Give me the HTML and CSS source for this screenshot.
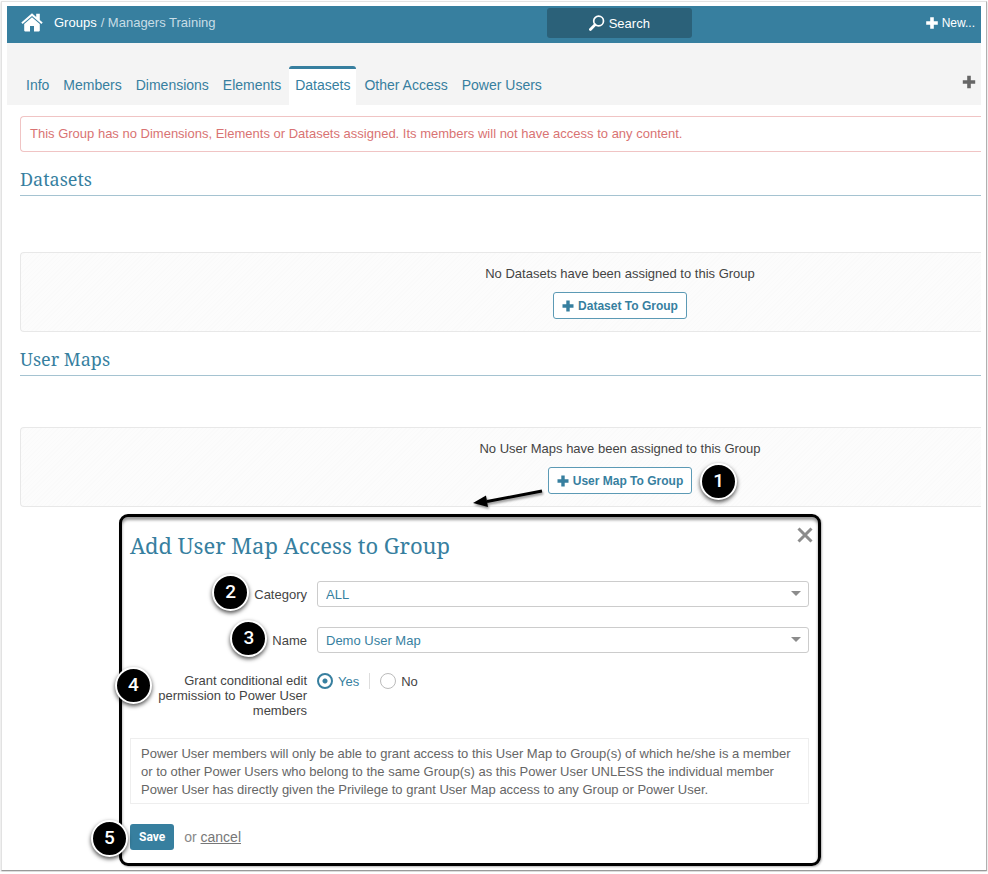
FILE: index.html
```html
<!doctype html>
<html lang="en">

<head>
    <meta charset="utf-8">
    <meta name="viewport" content="width=device-width, initial-scale=1">
    <title>Groups / Managers Training</title>
    <link rel="stylesheet" href="styles.css">
</head>

<body>
    <div class="frame">
        <header class="topbar">
            <nav class="crumbs">
                <a class="home" href="#" aria-label="Home">
                    <svg width="22" height="19" viewBox="0 0 22 19" fill="#fff">
                        <path d="M11 0.2L0.3 9.6L1.6 11.1L11 3L20.4 11.1L21.7 9.6L18.8 7.1V0.8H15.2V3.9Z" />
                        <path d="M11 4.2L3.2 10.9V17.6Q3.2 18.4 4 18.4H9V13H13V18.4H18Q18.8 18.4 18.8 17.6V10.9Z" />
                    </svg>
                </a>
                <a class="crumb" href="#">Groups</a>
                <span class="crumb-current">/ Managers Training</span>
            </nav>
            <button class="search" type="button">
                <svg width="16" height="16" viewBox="0 0 16 16" fill="none" stroke="#fff">
                    <circle cx="9.6" cy="6" r="4.9" stroke-width="1.7" />
                    <path d="M6 9.8L1.4 14.4" stroke-width="2.8" stroke-linecap="round" />
                </svg>
                Search
            </button>
            <button class="new" type="button">
                <svg width="12" height="12" viewBox="0 0 12 12" fill="#fff">
                    <path d="M4.2 0.2H7.8V4.2H11.8V7.8H7.8V11.8H4.2V7.8H0.2V4.2H4.2Z" />
                </svg>
                New...
            </button>
        </header>

        <nav class="tabs">
            <a class="tab" href="#">Info</a>
            <a class="tab" href="#">Members</a>
            <a class="tab" href="#">Dimensions</a>
            <a class="tab" href="#">Elements</a>
            <a class="tab active" href="#">Datasets</a>
            <a class="tab" href="#">Other Access</a>
            <a class="tab" href="#">Power Users</a>
            <button class="add-tab" type="button" aria-label="Add">
                <svg width="14" height="14" viewBox="0 0 14 14" fill="#666">
                    <path d="M5.2 0.8H8.8V5.2H13.2V8.8H8.8V13.2H5.2V8.8H0.8V5.2H5.2Z" />
                </svg>
            </button>
        </nav>

        <main class="content">
            <p class="alert">This Group has no Dimensions, Elements or Datasets assigned. Its members will not have access to any content.</p>

            <section class="section">
                <h2>Datasets</h2>
                <div class="panel">
                    <p>No Datasets have been assigned to this Group</p>
                    <button class="outline" type="button">
                        <svg width="12" height="12" viewBox="0 0 12 12" fill="#377f9f">
                            <path d="M4.3 0.5H7.7V4.3H11.5V7.7H7.7V11.5H4.3V7.7H0.5V4.3H4.3Z" />
                        </svg>
                        Dataset To Group
                    </button>
                </div>
            </section>

            <section class="section maps">
                <h2>User Maps</h2>
                <div class="panel">
                    <p>No User Maps have been assigned to this Group</p>
                    <div class="anchor">
                        <button class="outline" type="button">
                            <svg width="12" height="12" viewBox="0 0 12 12" fill="#377f9f">
                                <path d="M4.3 0.5H7.7V4.3H11.5V7.7H7.7V11.5H4.3V7.7H0.5V4.3H4.3Z" />
                            </svg>
                            User Map To Group
                        </button>
                        <svg class="arrow" width="72" height="24" viewBox="0 0 72 24">
                            <path d="M69 6L14 16.5" stroke="#000" stroke-width="3" />
                            <path d="M0 18L13 10.5L15 22Z" fill="#000" />
                        </svg>
                        <span class="step step-1">1</span>
                    </div>
                </div>
            </section>
        </main>

        <form class="modal">
            <div class="modal-head">
                <h1>Add User Map Access to Group</h1>
                <button class="close" type="button" aria-label="Close">
                    <svg width="16" height="16" viewBox="0 0 16 16" stroke="#8c8c8c" stroke-width="3">
                        <path d="M1.5 1.5L14.5 14.5M14.5 1.5L1.5 14.5" />
                    </svg>
                </button>
            </div>

            <div class="row">
                <label class="label" for="category"><span class="step step-2">2</span>Category</label>
                <div class="select">
                    <select id="category">
                        <option>ALL</option>
                    </select>
                </div>
            </div>

            <div class="row">
                <label class="label" for="name"><span class="step step-3">3</span>Name</label>
                <div class="select">
                    <select id="name">
                        <option>Demo User Map</option>
                    </select>
                </div>
            </div>

            <div class="row grant" role="radiogroup" aria-labelledby="grant-label">
                <div class="label" id="grant-label"><span class="step step-4">4</span>Grant conditional edit permission to Power User members</div>
                <div class="radios">
                    <label class="radio yes"><input type="radio" name="grant" checked>Yes</label>
                    <label class="radio"><input type="radio" name="grant">No</label>
                </div>
            </div>

            <p class="note">Power User members will only be able to grant access to this User Map to Group(s) of which he/she is a member or to other Power Users who belong to the same Group(s) as this Power User UNLESS the individual member Power User has directly given the Privilege to grant User Map access to any Group or Power User.</p>

            <div class="actions">
                <span class="step step-5">5</span>
                <button class="save" type="button">Save</button>
                <span>or <a class="cancel" href="#">cancel</a></span>
            </div>
        </form>
    </div>
</body>

</html>
```
FILE: styles.css
```css
* {
    box-sizing: border-box;
}

body {
    margin: 0;
    padding: 1px;
    background-color: #fff;
    color: #444;
    font-family: "Liberation Sans", Arial, sans-serif;
    font-size: 13px;
}

h1,
h2,
p {
    margin: 0;
}

a {
    color: #377f9f;
    text-decoration: none;
}

button {
    display: flex;
    align-items: center;
    justify-content: center;
    border: none;
    padding: 0;
    background: none;
    font-family: inherit;
    font-size: 13px;
    cursor: pointer;
}

.frame {
    border: 1px solid #e2e2e2;
    border-right-color: #b0b0b0;
    border-bottom-color: #999;
    box-shadow: 0 1px 2px #ccc;
    padding: 4px 5px 4px 5px;
}

/* Top bar */
.topbar {
    display: grid;
    grid-template-columns: 28fr 145px 15fr;
    align-items: center;
    height: 37px;
    background-color: #377f9f;
}

.crumbs {
    display: flex;
    align-items: center;
    gap: 4px;
    padding-left: 14px;
    padding-bottom: 4px;
}

.home {
    display: flex;
    margin-right: 7px;
}

.crumb {
    color: #fff;
}

.crumb-current {
    color: #c8dde6;
}

.search {
    gap: 4px;
    height: 30px;
    margin-bottom: 3px;
    border-radius: 3px;
    background-color: #2b6179;
    color: #fff;
}

.new {
    justify-self: end;
    gap: 4px;
    padding-right: 6px;
    padding-bottom: 4px;
    color: #fff;
    font-size: 12px;
}

/* Tabs */
.tabs {
    display: flex;
    align-items: flex-end;
    gap: 2px;
    height: 62px;
    padding-left: 13px;
    background-color: #f4f4f4;
}

.tab {
    padding: 0 6px 4px;
    border-top: 3px solid transparent;
    font-size: 14px;
    line-height: 32px;
}

.active {
    border-top-color: #377f9f;
    border-radius: 3px 3px 0 0;
    background-color: #fff;
}

.add-tab {
    margin-left: auto;
    padding: 0 5px 16px;
}

/* Content */
.content {
    padding: 11px 0 0 13px;
}

.alert {
    padding: 0 9px;
    border: 1px solid #f0c4c4;
    border-right: none;
    border-radius: 4px 0 0 4px;
    color: #d97373;
    line-height: 34px;
}

h1,
h2 {
    color: #377f9f;
    font-family: "Noto Serif", "Droid Serif", "Liberation Serif", serif;
    font-weight: normal;
}

h2 {
    padding-top: 12px;
    margin-bottom: 56px;
    border-bottom: 1px solid #a5c3d1;
    font-size: 18px;
    line-height: 31px;
}

.maps h2 {
    margin-bottom: 51px;
}

.panel {
    display: flex;
    flex-direction: column;
    align-items: center;
    padding: 12px 0 12px 238px;
    border: 1px solid #e8e8e8;
    border-right: none;
    border-radius: 4px 0 0 4px;
    background: repeating-linear-gradient(135deg, #fcfcfc 0 2px, #fafafa 2px 3px);
}

.panel p {
    margin-bottom: 9px;
    line-height: 18px;
}

.outline {
    gap: 4px;
    height: 27px;
    padding: 0 8px;
    border: 1px solid #5c9ab5;
    border-radius: 3px;
    background-color: #fff;
    color: #377f9f;
    font-size: 12px;
    font-weight: bold;
}

.anchor {
    position: relative;
}

.arrow {
    position: absolute;
    top: 18px;
    right: calc(100% + 3px);
    filter: drop-shadow(1px 2px 1px rgba(0, 0, 0, 0.4));
}

/* Dialog */
.modal {
    margin: 7px 160px 0 112px;
    padding: 10px 9px 13px 8px;
    border: 3px solid #000;
    border-radius: 9px;
    box-shadow: inset 0 3px 3px rgba(0, 0, 0, 0.4), 1px 1px 2px rgba(0, 0, 0, 0.3);
}

.modal-head {
    display: flex;
    justify-content: space-between;
    align-items: flex-start;
    margin-right: -4px;
    margin-bottom: 20px;
}

h1 {
    padding-top: 2px;
    font-size: 22px;
    line-height: 32px;
}

.row {
    display: grid;
    grid-template-columns: 177px 1fr;
    gap: 10px;
    margin-bottom: 20px;
}

.label {
    position: relative;
    justify-self: end;
    align-self: center;
    text-align: right;
    line-height: 15px;
}

.select {
    position: relative;
}

.select::after {
    content: "";
    position: absolute;
    top: 10px;
    right: 8px;
    border: 5px solid transparent;
    border-top-color: #8c8c8c;
    border-bottom: none;
    pointer-events: none;
}

select {
    display: block;
    appearance: none;
    width: 100%;
    height: 26px;
    padding: 0 8px;
    border: 1px solid #ccc;
    border-radius: 3px;
    background-color: #fff;
    color: #377f9f;
    font-family: inherit;
    font-size: 13px;
}

.grant .label {
    padding-left: 24px;
}

.radios {
    display: flex;
    align-items: center;
    align-self: start;
}

.radio {
    display: flex;
    align-items: center;
    gap: 5px;
}

.radio input {
    appearance: none;
    width: 16px;
    height: 16px;
    margin: 0;
    border: 1px solid #bbb;
    border-radius: 50%;
}

.radio input:checked {
    border: 2px solid #377f9f;
    background: radial-gradient(circle, #377f9f 2px, #fff 3px);
}

.yes {
    margin-right: 10px;
    padding-right: 10px;
    border-right: 1px solid #ddd;
    color: #377f9f;
}

.note {
    margin-bottom: 20px;
    padding: 6px 10px 4px;
    border: 1px solid #eee;
    color: #666;
    line-height: 18px;
}

.actions {
    position: relative;
    display: flex;
    align-items: center;
    gap: 10px;
    color: #888;
    font-size: 14px;
}

.save {
    height: 26px;
    padding: 0 9px;
    border-radius: 3px;
    background-color: #377f9f;
    color: #fff;
    font-family: Roboto, sans-serif;
    font-size: 12px;
    font-weight: bold;
}

.cancel {
    color: #777;
    text-decoration: underline;
}

/* Numbered callouts */
.step {
    position: absolute;
    width: 37px;
    height: 37px;
    border: 2px solid #fff;
    border-radius: 50%;
    background-color: #000;
    box-shadow: 0 2px 4px rgba(0, 0, 0, 0.7);
    color: #fff;
    font-family: Roboto, sans-serif;
    font-size: 19px;
    font-weight: 500;
    line-height: 32px;
    text-align: center;
}

.step-1 {
    top: -4px;
    left: calc(100% + 8px);
}

.step-2,
.step-3 {
    top: -13px;
    right: calc(100% + 5px);
}

.step-4 {
    top: -6px;
    left: -15px;
}

.step-5 {
    top: -4px;
    left: -39px;
}
```
